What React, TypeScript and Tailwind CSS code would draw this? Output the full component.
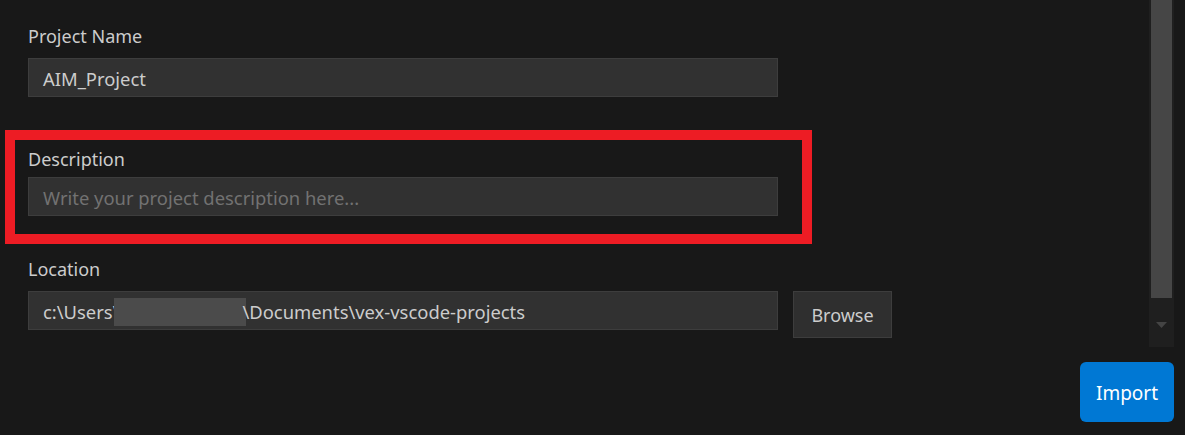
const font = { fontFamily: '"Noto Sans", "Open Sans", sans-serif' }

function Field({ label, children, labelClass }: { label: string; children: React.ReactNode; labelClass: string }) {
  return (
    <div className="flex flex-col">
      <div className={`text-[18px] leading-[24px] text-[#cccccc] ${labelClass}`}>{label}</div>
      {children}
    </div>
  )
}

function TextBox({ children, placeholder }: { children?: React.ReactNode; placeholder?: boolean }) {
  return (
    <div
      className={`flex h-[39px] w-[750px] items-center border border-[#3d3d3d] bg-[#313131] pl-[14px] pt-[2px] text-[18.4px] ${
        placeholder ? 'text-[#727272]' : 'text-[#cccccc]'
      }`}
    >
      {children}
    </div>
  )
}

export default function App() {
  return (
    <div className="relative flex h-[435px] w-[1185px] flex-col overflow-hidden bg-[#181818]" style={font}>
      <div className="flex h-[347px]">
        {/* form */}
        <div className="flex flex-1 flex-col pl-[28px] pt-[24px]">
          <Field label="Project Name" labelClass="mb-[10px]">
            <TextBox>AIM_Project</TextBox>
          </Field>

          <div className="mt-[50px]">
            <Field label="Description" labelClass="mb-[6px]">
              <TextBox placeholder>Write your project description here...</TextBox>
            </Field>
          </div>

          <div className="mt-[41px]">
            <Field label="Location" labelClass="mb-[10px]">
              <div className="flex items-start gap-[15px]">
                <TextBox>
                  <span className="whitespace-pre">c:\Users\</span>
                  <span className="ml-[-5px] inline-block h-[28px] w-[132px] bg-[#4b4b4b]" />
                  <span className="ml-[-4px] whitespace-pre">\Documents\vex-vscode-projects</span>
                </TextBox>
                <button className="flex h-[47px] w-[99px] items-center justify-center border border-[#3d3d3d] bg-[#2f2f2f] pt-[2px] text-[18px] text-[#cccccc]">
                  Browse
                </button>
              </div>
            </Field>
          </div>
        </div>

        {/* scrollbar */}
        <div className="mr-[11px] flex w-[25px] flex-col items-center bg-[#1f1f1f]">
          <div className="h-[298px] w-[21px] bg-[#464646]" />
          <div className="flex flex-1 items-center justify-center pt-[4px]">
            <svg width="11" height="6" viewBox="0 0 11 6">
              <path d="M0 0 H11 L5.5 6 Z" fill="#444444" />
            </svg>
          </div>
        </div>
      </div>

      <div className="flex justify-end pr-[11px] pt-[15px]">
        <button className="flex h-[60px] w-[94px] items-center justify-center rounded-[6px] bg-[#0078d4] pt-[2px] text-[19px] text-white">
          Import
        </button>
      </div>

      {/* annotation highlight */}
      <div className="pointer-events-none absolute left-[5px] top-[130px] h-[114px] w-[807px] border-[10px] border-[#ed1c24]" />
    </div>
  )
}
